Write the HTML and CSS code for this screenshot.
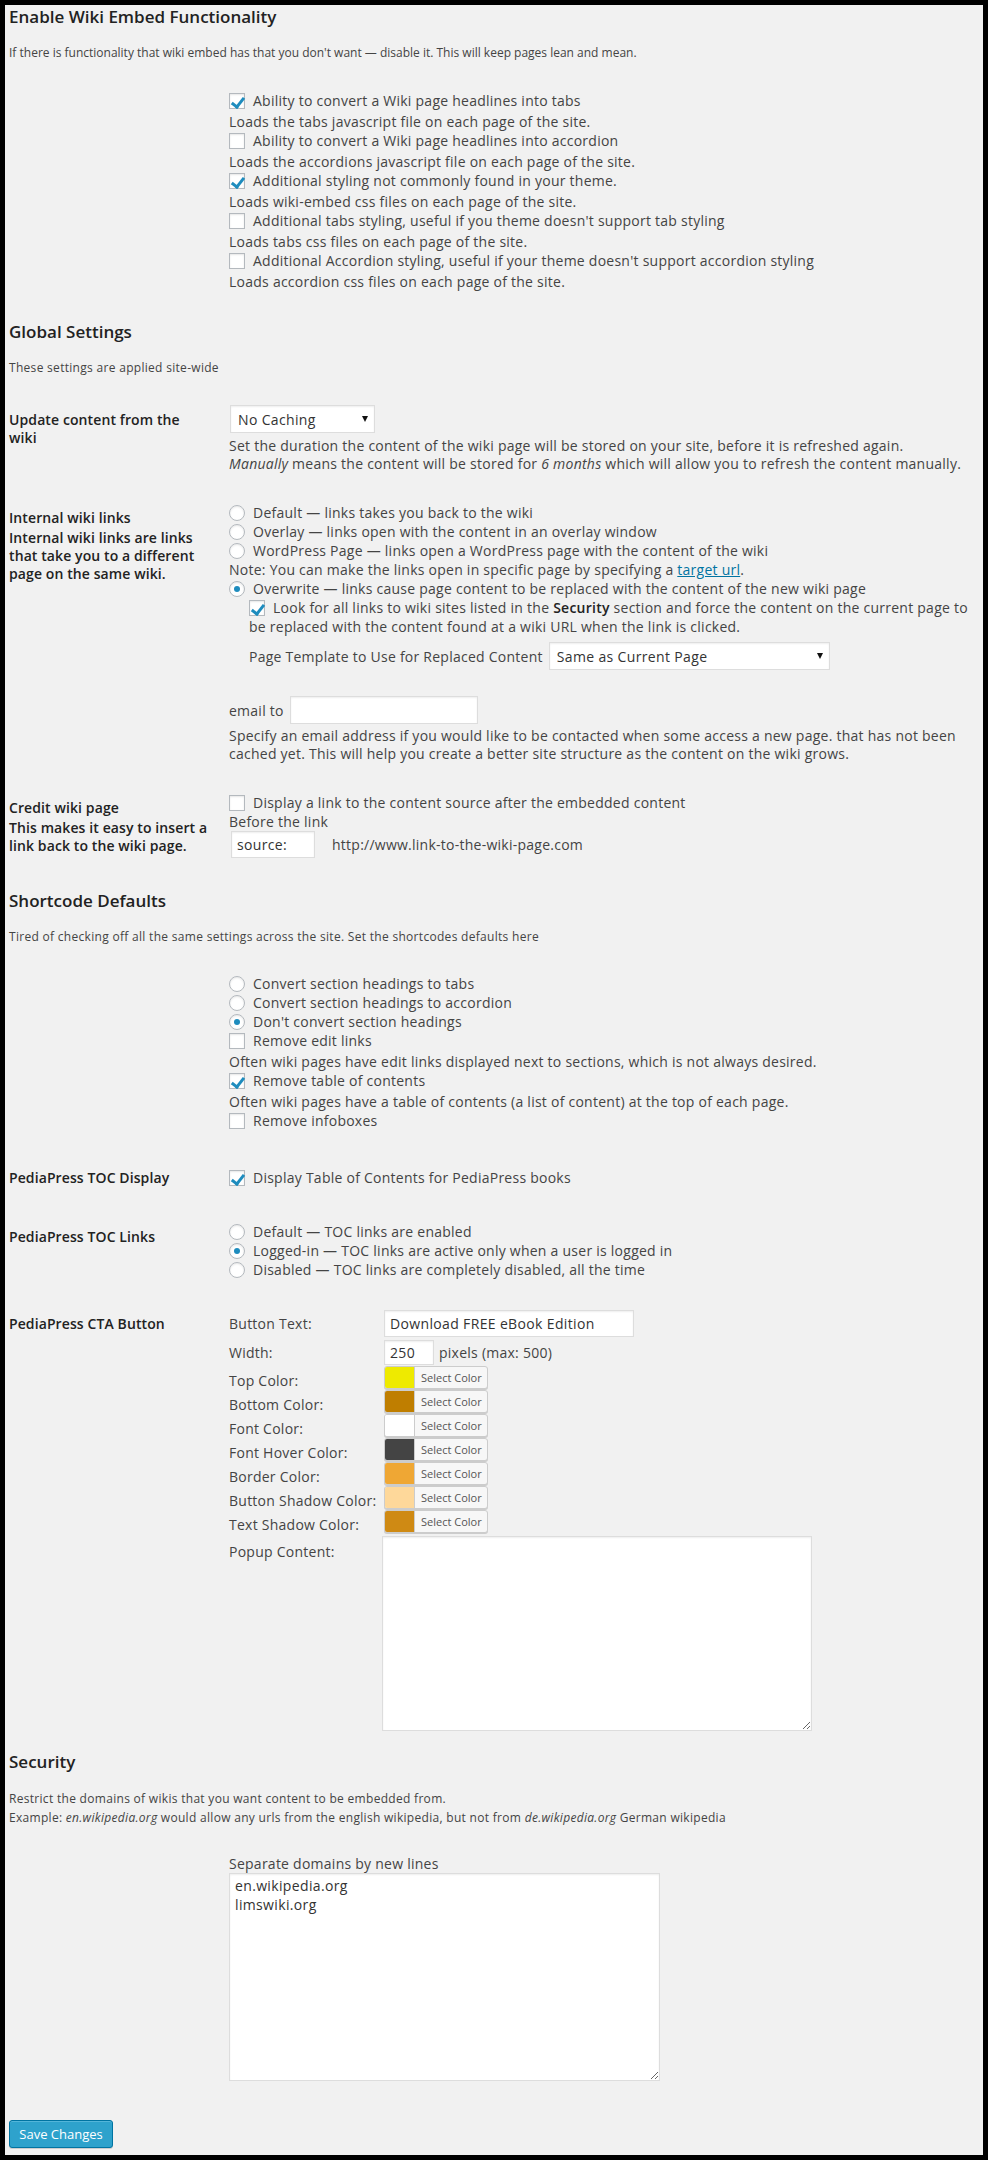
FILE: index.html
```html
<!DOCTYPE html>
<html lang="en">
<head>
<meta charset="utf-8">
<title>Wiki Embed Settings</title>
<link rel="stylesheet" href="styles.css">
</head>
<body>
<form class="page">

  <h3 class="sec-title sec-title--first">Enable Wiki Embed Functionality</h3>
  <p class="sec-desc">If there is functionality that wiki embed has that you don't want — disable it. This will keep pages lean and mean.</p>
  <div class="row row--mt29">
    <div class="row-label"></div>
    <div class="row-field">
      <label class="opt"><input type="checkbox" checked>Ability to convert a Wiki page headlines into tabs</label>
      <p class="opt-desc">Loads the tabs javascript file on each page of the site.</p>
      <label class="opt"><input type="checkbox">Ability to convert a Wiki page headlines into accordion</label>
      <p class="opt-desc">Loads the accordions javascript file on each page of the site.</p>
      <label class="opt"><input type="checkbox" checked>Additional styling not commonly found in your theme.</label>
      <p class="opt-desc">Loads wiki-embed css files on each page of the site.</p>
      <label class="opt"><input type="checkbox">Additional tabs styling, useful if you theme doesn't support tab styling</label>
      <p class="opt-desc">Loads tabs css files on each page of the site.</p>
      <label class="opt"><input type="checkbox">Additional Accordion styling, useful if your theme doesn't support accordion styling</label>
      <p class="opt-desc">Loads accordion css files on each page of the site.</p>
    </div>
  </div>

  <h3 class="sec-title sec-title--mt30">Global Settings</h3>
  <p class="sec-desc sec-desc--wide">These settings are applied site-wide</p>

  <div class="row row--mt27">
    <div class="row-label row-label--pt7">Update content from the<br>wiki</div>
    <div class="row-field">
      <span class="select select--cache"><select class="select-box select-box--cache"><option>No Caching</option></select></span>
      <p class="field-desc field-desc--mt4">Set the duration the content of the wiki page will be stored on your site, before it is refreshed again.<br><em>Manually</em> means the content will be stored for <em>6 months</em> which will allow you to refresh the content manually.</p>
    </div>
  </div>

  <div class="row row--mt30">
    <div class="row-label row-label--pt6">Internal wiki links<span class="sub">Internal wiki links are links<br>that take you to a different<br>page on the same wiki.</span></div>
    <div class="row-field">
      <label class="opt"><input type="radio" name="links">Default — links takes you back to the wiki</label>
      <label class="opt"><input type="radio" name="links">Overlay — links open with the content in an overlay window</label>
      <label class="opt"><input type="radio" name="links">WordPress Page — links open a WordPress page with the content of the wiki</label>
      <p class="note">Note: You can make the links open in specific page by specifying a <a href="#" class="link">target url</a>.</p>
      <label class="opt"><input type="radio" name="links" checked>Overwrite — links cause page content to be replaced with the content of the new wiki page</label>
      <p class="look"><input type="checkbox" class="inline-check" checked>Look for all links to wiki sites listed in the <strong>Security</strong> section and force the content on the current page to<br>be replaced with the content found at a wiki URL when the link is clicked.</p>
      <div class="template">
        <span class="template-text">Page Template to Use for Replaced Content</span>
        <span class="select"><select class="select-box select-box--template"><option>Same as Current Page</option></select></span>
      </div>
      <div class="email">
        <span>email to</span>
        <input type="text" class="text-input text-input--email">
      </div>
      <p class="field-desc field-desc--mt3">Specify an email address if you would like to be contacted when some access a new page. that has not been<br>cached yet. This will help you create a better site structure as the content on the wiki grows.</p>
    </div>
  </div>

  <div class="row row--mt30">
    <div class="row-label row-label--pt6">Credit wiki page<span class="sub">This makes it easy to insert a<br>link back to the wiki page.</span></div>
    <div class="row-field">
      <label class="opt"><input type="checkbox">Display a link to the content source after the embedded content</label>
      <p class="line">Before the link</p>
      <div class="source">
        <input type="text" class="text-input text-input--source" value="source:">
        <span class="source-url">http://www.link-to-the-wiki-page.com</span>
      </div>
    </div>
  </div>

  <h3 class="sec-title sec-title--mt32">Shortcode Defaults</h3>
  <p class="sec-desc sec-desc--wide">Tired of checking off all the same settings across the site. Set the shortcodes defaults here</p>

  <div class="row row--mt28">
    <div class="row-label"></div>
    <div class="row-field">
      <label class="opt"><input type="radio" name="sc">Convert section headings to tabs</label>
      <label class="opt"><input type="radio" name="sc">Convert section headings to accordion</label>
      <label class="opt"><input type="radio" name="sc" checked>Don't convert section headings</label>
      <label class="opt"><input type="checkbox">Remove edit links</label>
      <p class="opt-desc">Often wiki pages have edit links displayed next to sections, which is not always desired.</p>
      <label class="opt"><input type="checkbox" checked>Remove table of contents</label>
      <p class="opt-desc">Often wiki pages have a table of contents (a list of content) at the top of each page.</p>
      <label class="opt"><input type="checkbox">Remove infoboxes</label>
    </div>
  </div>

  <div class="row row--mt38">
    <div class="row-label row-label--pt1">PediaPress TOC Display</div>
    <div class="row-field">
      <label class="opt"><input type="checkbox" checked>Display Table of Contents for PediaPress books</label>
    </div>
  </div>

  <div class="row row--mt35">
    <div class="row-label row-label--pt6">PediaPress TOC Links</div>
    <div class="row-field">
      <label class="opt"><input type="radio" name="toc">Default — TOC links are enabled</label>
      <label class="opt"><input type="radio" name="toc" checked>Logged-in — TOC links are active only when a user is logged in</label>
      <label class="opt"><input type="radio" name="toc">Disabled — TOC links are completely disabled, all the time</label>
    </div>
  </div>

  <div class="row row--mt31">
    <div class="row-label row-label--pt5">PediaPress CTA Button</div>
    <div class="row-field">
      <div class="cta-row cta-row--text">
        <span class="cta-label">Button Text:</span>
        <input type="text" class="text-input text-input--btn" value="Download FREE eBook Edition">
      </div>
      <div class="cta-row cta-row--width">
        <span class="cta-label">Width:</span>
        <span class="width-field"><input type="text" class="text-input text-input--width" value="250"><span>pixels (max: 500)</span></span>
      </div>
      <div class="colors">
        <div class="cta-row cta-row--color">
          <span class="cta-label">Top Color:</span>
          <button type="button" class="color-btn"><span class="swatch swatch--top"></span><span class="color-txt">Select Color</span></button>
        </div>
        <div class="cta-row cta-row--color">
          <span class="cta-label">Bottom Color:</span>
          <button type="button" class="color-btn"><span class="swatch swatch--bottom"></span><span class="color-txt">Select Color</span></button>
        </div>
        <div class="cta-row cta-row--color">
          <span class="cta-label">Font Color:</span>
          <button type="button" class="color-btn"><span class="swatch swatch--font"></span><span class="color-txt">Select Color</span></button>
        </div>
        <div class="cta-row cta-row--color">
          <span class="cta-label">Font Hover Color:</span>
          <button type="button" class="color-btn"><span class="swatch swatch--hover"></span><span class="color-txt">Select Color</span></button>
        </div>
        <div class="cta-row cta-row--color">
          <span class="cta-label">Border Color:</span>
          <button type="button" class="color-btn"><span class="swatch swatch--border"></span><span class="color-txt">Select Color</span></button>
        </div>
        <div class="cta-row cta-row--color">
          <span class="cta-label">Button Shadow Color:</span>
          <button type="button" class="color-btn"><span class="swatch swatch--bshadow"></span><span class="color-txt">Select Color</span></button>
        </div>
        <div class="cta-row cta-row--color">
          <span class="cta-label">Text Shadow Color:</span>
          <button type="button" class="color-btn"><span class="swatch swatch--tshadow"></span><span class="color-txt">Select Color</span></button>
        </div>
      </div>
      <div class="cta-row cta-row--popup">
        <span class="cta-label cta-label--pt6">Popup Content:</span>
        <textarea class="textarea textarea--popup"></textarea>
      </div>
    </div>
  </div>

  <h3 class="sec-title sec-title--mt20">Security</h3>
  <p class="sec-desc sec-desc--wide sec-desc--lh19">Restrict the domains of wikis that you want content to be embedded from.<br>Example: <em>en.wikipedia.org</em> would allow any urls from the english wikipedia, but not from <em>de.wikipedia.org</em> German wikipedia</p>

  <div class="row row--mt27">
    <div class="row-label"></div>
    <div class="row-field">
      <p class="line">Separate domains by new lines</p>
      <textarea class="textarea textarea--domains">en.wikipedia.org
limswiki.org</textarea>
    </div>
  </div>

  <div class="submit">
    <button type="button" class="save-btn">Save Changes</button>
  </div>
</form>
</body>
</html>
```
FILE: styles.css
```css
* { box-sizing: border-box; }
html, body { margin: 0; padding: 0; }
body {
  background: #000;
  font-family: "Open Sans", "Noto Sans", sans-serif;
  font-size: 14px;
  letter-spacing: 0.25px;
  color: #444;
}
.page {
  display: block;
  width: 988px;
  height: 2160px;
  border: 5px solid #000;
  background: #f1f1f1;
  padding: 1px 4px 0;
  overflow: hidden;
}
p { margin: 0; }

/* section headings */
.sec-title {
  margin: 0;
  font-size: 17px;
  line-height: 22px;
  font-weight: 600;
  letter-spacing: 0;
  color: #222;
}
.sec-title--mt20 { margin-top: 20px; }
.sec-title--mt30 { margin-top: 30px; }
.sec-title--mt32 { margin-top: 32px; }
.sec-desc {
  margin-top: 16px;
  font-size: 12px;
  line-height: 18px;
  letter-spacing: 0;
}
.sec-desc--wide { letter-spacing: 0.3px; }
.sec-desc--lh19 { line-height: 19px; }

/* rows */
.row {
  display: grid;
  grid-template-columns: 220px 1fr;
  align-items: start;
}
.row--mt27 { margin-top: 27px; }
.row--mt28 { margin-top: 28px; }
.row--mt29 { margin-top: 29px; }
.row--mt30 { margin-top: 30px; }
.row--mt31 { margin-top: 31px; }
.row--mt35 { margin-top: 35px; }
.row--mt38 { margin-top: 38px; }

.row-label {
  font-size: 14px;
  font-weight: 600;
  line-height: 18px;
  letter-spacing: 0.1px;
  color: #222;
  white-space: nowrap;
}
.row-label .sub { display: block; margin-top: 2px; }
.row-label--pt1 { padding-top: 1px; }
.row-label--pt5 { padding-top: 5px; }
.row-label--pt6 { padding-top: 6px; }
.row-label--pt7 { padding-top: 7px; }

.row-field { min-width: 0; }

/* options */
.opt {
  display: flex;
  align-items: center;
  height: 19px;
  line-height: 19px;
  white-space: nowrap;
}
.opt input { margin: 0 8px 0 0; flex: none; }
.opt-desc { margin-top: 2px; line-height: 19px; white-space: nowrap; }
.note, .line { line-height: 19px; white-space: nowrap; }
.link { color: #0074a2; text-decoration: underline; }
.look {
  margin-left: 20px;
  line-height: 19px;
  white-space: nowrap;
}
.look strong { font-weight: 600; color: #222; }
.inline-check { margin: 0 8px 0 0; vertical-align: -3px; }

input[type="checkbox"], input[type="radio"] {
  -webkit-appearance: none;
  appearance: none;
  position: relative;
  width: 16px;
  height: 16px;
  border: 1px solid #b4b9be;
  background: #fff;
  box-shadow: inset 0 1px 2px rgba(0,0,0,.1);
  display: inline-block;
}
input[type="radio"] { border-radius: 50%; }
input[type="checkbox"]:checked::before {
  content: "";
  position: absolute;
  left: 4px;
  top: 1px;
  width: 5px;
  height: 10px;
  border-right: 3px solid #1e8cbe;
  border-bottom: 3px solid #1e8cbe;
  transform: rotate(38deg);
}
input[type="radio"]:checked::before {
  content: "";
  position: absolute;
  left: 4px;
  top: 4px;
  width: 6px;
  height: 6px;
  border-radius: 50%;
  background: #1e8cbe;
}

/* selects & inputs */
.select { position: relative; display: inline-block; }
.select::after {
  content: "";
  position: absolute;
  right: 7px;
  top: 50%;
  margin-top: -3px;
  border-left: 3px solid transparent;
  border-right: 3px solid transparent;
  border-top: 6px solid #111;
  pointer-events: none;
}
.select--cache { display: block; width: 145px; margin: 1px 0 1px 1px; }
.select-box {
  -webkit-appearance: none;
  appearance: none;
  display: block;
  height: 28px;
  border: 1px solid #ddd;
  background: #fff;
  box-shadow: inset 0 1px 2px rgba(0,0,0,.07);
  font-family: inherit;
  font-size: 14px;
  letter-spacing: 0.35px;
  color: #333;
  padding: 0 20px 0 7px;
  border-radius: 0;
}
.select-box--cache { width: 145px; }
.select-box--template { width: 281px; }

.field-desc { line-height: 18px; white-space: nowrap; }
.field-desc--mt3 { margin-top: 3px; }
.field-desc--mt4 { margin-top: 4px; }

.template {
  display: flex;
  align-items: center;
  gap: 6px;
  margin: 6px 0 0 20px;
}
.email {
  display: flex;
  align-items: center;
  gap: 6px;
  margin-top: 26px;
}
.text-input {
  border: 1px solid #ddd;
  background: #fff;
  box-shadow: inset 0 1px 2px rgba(0,0,0,.07);
  font-family: inherit;
  font-size: 14px;
  letter-spacing: 0.35px;
  color: #333;
  padding: 0 5px;
  margin: 0;
  border-radius: 0;
  outline: none;
}
.text-input--email { width: 188px; height: 28px; }
.source { display: flex; align-items: center; }
.text-input--source { width: 84px; height: 27px; margin-left: 2px; }
.source-url { margin-left: 17px; }

/* CTA */
.cta-row {
  display: grid;
  grid-template-columns: 155px auto;
  align-items: center;
  justify-content: start;
}
.cta-label { line-height: 19px; white-space: nowrap; }
.text-input--btn { width: 250px; height: 27px; }
.cta-row--width { margin-top: 3px; }
.width-field { display: flex; align-items: center; gap: 5px; }
.text-input--width { width: 50px; height: 25px; }
.colors { margin-top: 1px; }
.cta-row--color { height: 24px; align-items: start; }
.cta-row--color .cta-label { padding-top: 5px; }
.color-btn {
  display: flex;
  align-items: stretch;
  width: 104px;
  height: 23px;
  padding: 0;
  margin: 0;
  border: 1px solid #ccc;
  border-radius: 3px;
  background: #f7f7f7;
  box-shadow: 0 1px 0 #ccc;
  overflow: hidden;
  font-family: inherit;
  cursor: pointer;
}
.swatch { width: 30px; flex: none; border-right: 1px solid #ccc; }
.swatch--top { background: #eeea00; }
.swatch--bottom { background: #bf7e00; }
.swatch--font { background: #ffffff; }
.swatch--hover { background: #444444; }
.swatch--border { background: #efa734; }
.swatch--bshadow { background: #fed89a; }
.swatch--tshadow { background: #cf8a14; }
.color-txt {
  font-size: 11px;
  line-height: 21px;
  letter-spacing: 0;
  color: #555;
  padding-left: 6px;
  white-space: nowrap;
}
.cta-row--popup { margin-top: 2px; align-items: start; }
.cta-label--pt6 { padding-top: 6px; }

.textarea {
  display: block;
  border: 1px solid #ddd;
  background: #fff;
  box-shadow: inset 0 1px 2px rgba(0,0,0,.07);
  font-family: inherit;
  font-size: 14px;
  line-height: 19px;
  letter-spacing: 0.35px;
  color: #333;
  padding: 2px 5px;
  margin: 0;
  resize: both;
  outline: none;
}
.textarea--popup { width: 430px; height: 195px; margin-left: -2px; }
.textarea--domains { width: 431px; height: 208px; }

/* submit */
.submit { margin-top: 39px; }
.save-btn {
  width: 104px;
  height: 28px;
  padding: 0;
  border: 1px solid #0074a2;
  border-radius: 3px;
  background: #2ea2cc;
  color: #fff;
  font-family: inherit;
  font-size: 13px;
  letter-spacing: 0;
  line-height: 26px;
  white-space: nowrap;
  box-shadow: inset 0 1px 0 rgba(120,200,230,.5), 0 1px 0 rgba(0,0,0,.15);
  cursor: pointer;
}
```
